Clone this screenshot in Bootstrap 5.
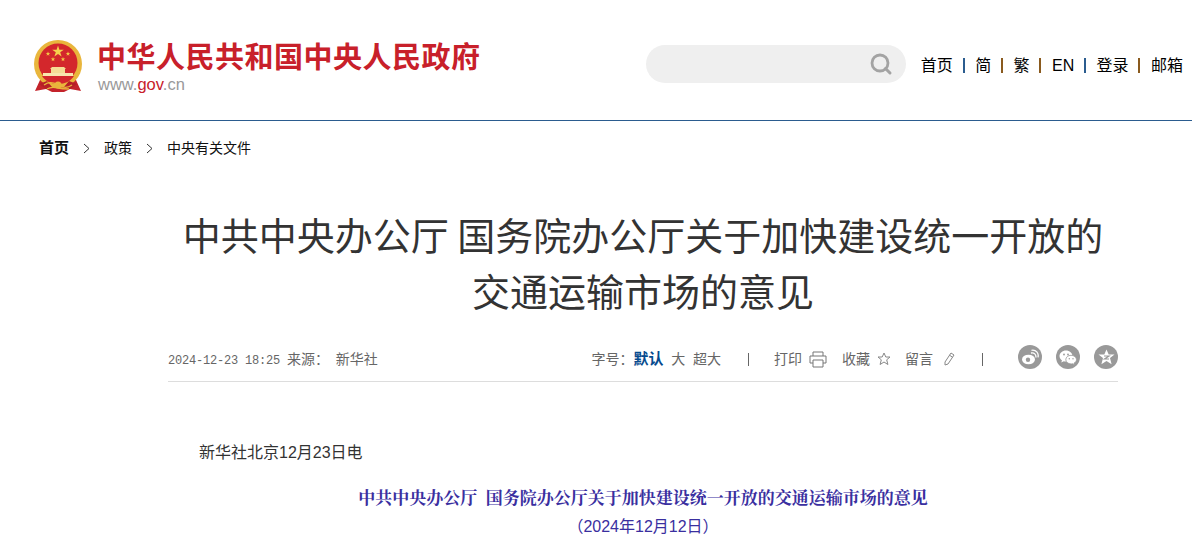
<!DOCTYPE html>
<html lang="zh">
<head>
<meta charset="utf-8">
<title>中共中央办公厅 国务院办公厅关于加快建设统一开放的交通运输市场的意见</title>
<link href="https://cdn.jsdelivr.net/npm/bootstrap@5.3.0/dist/css/bootstrap.min.css" rel="stylesheet">
<style>
body{font-family:"Liberation Sans","Noto Sans CJK SC",sans-serif;color:#000;overflow:hidden;height:555px;background:#fff}
.site-head{height:121px;border-bottom:1px solid #2b5c8f;padding:39px 9px 0 33px}
.emblem{margin:1px 14px 0 0}
.brand-name{font-size:29px;line-height:36px;font-weight:700;color:#c8202a;letter-spacing:.5px;white-space:nowrap;font-family:"Noto Sans CJK SC",sans-serif;margin-top:-2px}
.brand-url{font-size:16.5px;line-height:16px;color:#999;margin:3px 0 0 1px}
.brand-url em{font-style:normal;color:#c8202a}
.search-pill{width:260px;height:38px;border-radius:19px;background:#efefef;padding-right:13px;margin-top:6px}
.top-links{font-size:16px;line-height:20px;margin:17px 0 0 15px;color:#000;white-space:nowrap}
.top-links i{display:inline-block;width:2px;height:15px;background:#2b5c8f;margin:0 10.7px 0 9.7px;vertical-align:-2px}
.top-links i.warm{background:#8a5a1e}
.crumbs{font-size:14px;line-height:20px;padding:17px 0 0 39px;color:#111}
.crumbs b{font-weight:700;font-size:15px}
.crumbs svg{margin:0 13px 0 13px}
.article{width:950px;margin-left:168px}
.art-title{font-size:38px;line-height:56px;font-weight:400;color:#333;text-align:center;margin:48px 0 0;font-family:"Noto Sans CJK SC",sans-serif}
.art-meta{height:52px;border-bottom:1px solid #ddd;margin-top:12px;padding-top:17px;font-size:14px;line-height:20px;color:#666;white-space:nowrap}
.meta-left{margin-top:2px}
.meta-right{margin-top:-2px}
.stamp{font-family:"Liberation Mono",monospace;font-size:12px;letter-spacing:-.2px;margin-right:3px}
.src-name{margin-left:3px}
.art-meta .cur{color:#064b8e;font-weight:700;font-size:15px}
.fs-tools{margin-right:27px}
.vbar{display:inline-block;width:1px;height:13px;background:#666;margin-right:25px}
.vbar.last{margin-left:27px;margin-right:35px}
.ico-after{margin-left:7px}
.tool-gap{margin-left:15px}
.tool-gap2{margin-left:14px}
.pen-gap{margin-left:10px}
.round-ico{width:24px;height:24px;border-radius:50%;background:#999;display:flex;align-items:center;justify-content:center;margin-bottom:4px}
.round-ico + .round-ico{margin-left:14px}
.para{font-size:16px;line-height:24px;color:#333;padding-left:31px;margin-top:59px}
.blue-line{font-size:17px;line-height:24px;font-weight:700;color:#3a2f9f;text-align:center;margin:20px 0 0;font-family:"Noto Serif CJK SC","Noto Sans CJK SC",sans-serif}
.blue-date{font-size:16px;line-height:24px;color:#3a2f9f;text-align:center;margin:6px 0 0}
</style>
</head>
<body>
<header class="site-head d-flex justify-content-between align-items-start">
  <div class="d-flex">
    <svg class="emblem flex-shrink-0" width="50" height="54" viewBox="0 0 50 54" aria-hidden="true">
      <path d="M7 40 L2 51 L13 49 L19 52 L31 52 L37 49 L48 51 L43 40Z" fill="#c4232b"/>
      <circle cx="25" cy="24" r="24" fill="#e9b63c"/>
      <circle cx="25" cy="23" r="19.500" fill="#d3272c"/>
      <path d="M25 5.500l1.400 4.200h4.400l-3.600 2.600 1.400 4.200-3.600-2.600-3.600 2.600 1.400-4.200-3.600-2.600h4.400z" fill="#f6cf4d"/>
      <path d="M15 11.500l.6 1.600h1.700l-1.400 1 .5 1.700-1.400-1-1.400 1 .5-1.700-1.400-1h1.700zM35 11.500l.6 1.600h1.700l-1.400 1 .5 1.700-1.400-1-1.400 1 .5-1.700-1.400-1h1.700zM20 17l.6 1.600h1.700l-1.400 1 .5 1.700-1.400-1-1.400 1 .5-1.700-1.400-1h1.700zM30 17l.6 1.600h1.700l-1.400 1 .5 1.700-1.400-1-1.400 1 .5-1.700-1.400-1h1.700z" fill="#f3c745"/>
      <path d="M19 27h12l2 2H17zM18 29h14v4H18z" fill="#f5dc94"/>
      <path d="M10 33h30v3H10z" fill="#f8e6ad"/>
      <path d="M9 36h32c-3 5-9 8-16 8S12 41 9 36z" fill="#d3272c"/>
      <path d="M6 44l8-3 5 6-6 2zM44 44l-8-3-5 6 6 2z" fill="#b51f27"/>
      <circle cx="25" cy="45" r="3.500" fill="#e9b63c"/>
      <path d="M11 45c4-3 9-3 14 0s10 3 14 0M14 49c3-2 7-2 11-1s8 1 11 1" fill="none" stroke="#e9b63c" stroke-width="1.300"/>
    </svg>
    <div>
      <div class="brand-name">中华人民共和国中央人民政府</div>
      <div class="brand-url">www.<em>gov</em>.cn</div>
    </div>
  </div>
  <div class="d-flex align-items-start">
    <div class="search-pill d-flex align-items-center justify-content-end">
      <svg width="24" height="24" viewBox="0 0 24 24" aria-hidden="true"><circle cx="11" cy="11" r="8" fill="none" stroke="#a3a3a3" stroke-width="2.800"/><path d="M16.500 16.500L21 21" stroke="#a3a3a3" stroke-width="3" stroke-linecap="round"/></svg>
    </div>
    <div class="top-links">首页<i></i>简<i class="warm"></i>繁<i class="warm"></i>EN<i></i>登录<i class="warm"></i>邮箱</div>
  </div>
</header>

<nav class="crumbs d-flex align-items-center">
  <b>首页</b>
  <svg width="9" height="11" viewBox="0 0 9 11" aria-hidden="true"><path d="M2 1l5 4.500-5 4.500" fill="none" stroke="#333"/></svg>
  <span>政策</span>
  <svg width="9" height="11" viewBox="0 0 9 11" aria-hidden="true"><path d="M2 1l5 4.500-5 4.500" fill="none" stroke="#333"/></svg>
  <span>中央有关文件</span>
</nav>

<main class="article">
  <h1 class="art-title">中共中央办公厅 国务院办公厅关于加快建设统一开放的<br>交通运输市场的意见</h1>
  <div class="art-meta d-flex justify-content-between align-items-start">
    <div class="meta-left"><span class="stamp">2024-12-23 18:25</span> 来源：&nbsp;<span class="src-name">新华社</span></div>
    <div class="meta-right d-flex align-items-center">
      <span class="fs-tools">字号：<span class="cur">默认</span>&nbsp;&nbsp;大&nbsp;&nbsp;超大</span>
      <span class="vbar"></span>
      <span>打印</span>
      <svg class="ico-after" width="18" height="17" viewBox="0 0 18 17" aria-hidden="true"><path d="M4 5V1h10v4M4 12H1V5h16v7h-3M4 9h10v7H4z" fill="none" stroke="#777"/></svg>
      <span class="tool-gap">收藏</span>
      <svg class="ico-after" width="14" height="14" viewBox="0 0 14 14" aria-hidden="true"><path d="M7 1l1.800 4h4.200l-3.300 2.800 1.200 4.700L7 10l-3.900 2.500 1.200-4.700L1 5h4.200z" fill="none" stroke="#888"/></svg>
      <span class="tool-gap2">留言</span>
      <svg class="pen-gap" width="12" height="14" viewBox="0 0 12 14" aria-hidden="true"><path d="M8 1l3 2-6 9-3 1 0-3zM6.500 3.200l3 2" fill="none" stroke="#888"/></svg>
      <span class="vbar last"></span>
      <span class="round-ico"><svg width="18" height="16" viewBox="0 0 18 16" aria-hidden="true"><ellipse cx="7.500" cy="10.500" rx="6.500" ry="4.800" fill="#fff"/><circle cx="7" cy="10.800" r="2.200" fill="#999"/><path d="M10 4c3-.7 5.500 1.500 4.800 4.500M10.500 1.300c4.500-.8 7.500 2.800 6.500 7" fill="none" stroke="#fff" stroke-width="1.300"/></svg></span>
      <span class="round-ico"><svg width="18" height="15" viewBox="0 0 18 15" aria-hidden="true"><path d="M3 10.500l-.8 2 2.600-1.200A7 7 0 0 0 7 11.500c3.600 0 6.500-2.500 6.500-5.500S10.600.5 7 .5.500 3 .5 6c0 1.800 1 3.400 2.500 4.500z" fill="#fff"/><path d="M15 13.200l.5 1.500-2-1a6 6 0 0 1-1.500.2c-2.900 0-5.200-1.900-5.200-4.300S9.100 5.300 12 5.300s5.500 1.900 5.500 4.300c0 1.500-1 2.800-2.500 3.600z" fill="#fff" stroke="#999" stroke-width=".8"/><circle cx="5" cy="4.500" r=".9" fill="#999"/><circle cx="9" cy="4.500" r=".9" fill="#999"/><circle cx="10.300" cy="8.800" r=".7" fill="#999"/><circle cx="14" cy="8.800" r=".7" fill="#999"/></svg></span>
      <span class="round-ico"><svg width="17" height="16" viewBox="0 0 17 16" aria-hidden="true"><path d="M8.500 .5l2.200 5h5.800l-4.500 3.600 1.600 6.200-5.100-3.400-5.100 3.400 1.600-6.200L.5 5.500h5.800z" fill="#fff"/><path d="M6 7h5l-4.500 3h4.500" fill="none" stroke="#999" stroke-width="1.200"/></svg></span>
    </div>
  </div>
  <p class="para mb-0">新华社北京12月23日电</p>
  <p class="blue-line">中共中央办公厅&nbsp;&nbsp;国务院办公厅关于加快建设统一开放的交通运输市场的意见</p>
  <p class="blue-date mb-0">（2024年12月12日）</p>
</main>
</body>
</html>
